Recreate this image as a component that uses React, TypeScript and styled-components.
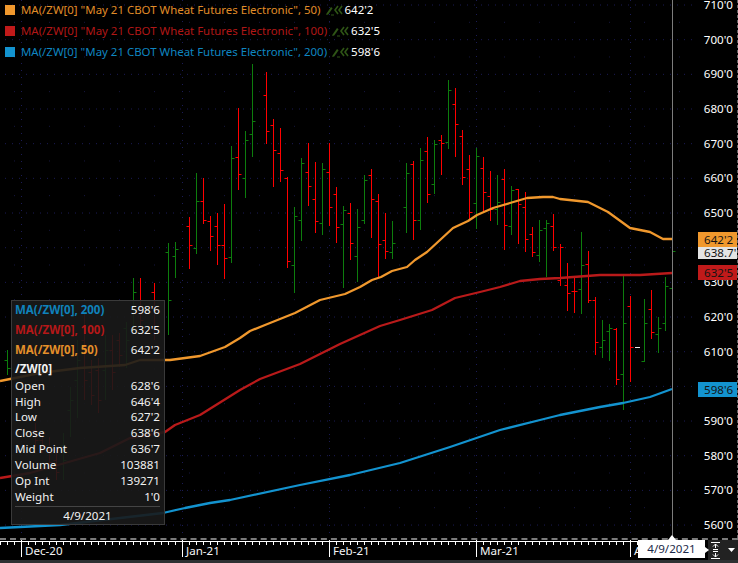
import React from 'react';
import styled, { createGlobalStyle } from 'styled-components';

const UI_FONT = `"Noto Sans", "Liberation Sans", sans-serif`;

const GlobalStyle = createGlobalStyle`
  html, body {
    margin: 0;
    padding: 0;
    background: #000;
  }
`;

// x, high, low, open tick, close tick (all in chart pixels)
type Bar = [number, number, number, number, number];

const RED_BARS: Bar[] = [
  [140, 278, 330, 300, 320], [154, 283, 340, 292, 310],
  [189, 217, 269, 226, 245], [203, 178, 224, 201, 220], [210, 216, 251, 221, 236],
  [217, 213, 265, 226, 245], [224, 204, 279, 245, 258], [238, 108, 190, 157, 174],
  [266, 72, 144, 95, 131], [273, 119, 187, 125, 150], [280, 128, 182, 153, 170],
  [287, 177, 268, 178, 261], [308, 143, 206, 172, 186], [315, 162, 233, 199, 221],
  [329, 143, 226, 172, 207], [336, 187, 243, 194, 227], [350, 203, 260, 213, 243],
  [371, 169, 238, 175, 199], [378, 194, 278, 201, 244], [385, 213, 259, 240, 251],
  [413, 161, 240, 164, 220], [427, 137, 203, 151, 194], [441, 135, 175, 140, 143],
  [455, 88, 157, 104, 124], [462, 130, 185, 136, 177], [469, 155, 220, 169, 212],
  [483, 157, 212, 168, 192], [490, 171, 221, 196, 209], [504, 169, 250, 179, 225],
  [518, 189, 244, 189, 204], [525, 192, 252, 207, 239], [532, 227, 257, 234, 252],
  [553, 214, 251, 226, 247], [560, 244, 286, 280, 247], [567, 263, 311, 285, 293],
  [574, 278, 313, 291, 291], [588, 251, 303, 264, 300], [595, 297, 355, 300, 342],
  [616, 328, 385, 329, 379], [630, 296, 382, 306, 347], [651, 290, 339, 309, 332],
  // behind the data box
  [35, 423, 447, 430, 440], [42, 433, 453, 440, 446], [49, 437, 470, 450, 462],
  [56, 453, 480, 460, 472], [84, 313, 400, 340, 380], [91, 360, 405, 372, 395],
  [98, 358, 413, 370, 400], [112, 335, 390, 350, 372], [119, 333, 367, 340, 355],
];

const GREEN_BARS: Bar[] = [
  [7, 350, 375, 360, 368], [133, 278, 332, 300, 292], [168, 243, 335, 252, 300],
  [175, 242, 278, 256, 249], [196, 173, 254, 248, 201], [231, 146, 263, 257, 158],
  [245, 131, 198, 178, 140], [252, 64, 157, 134, 121], [294, 207, 293, 265, 216],
  [301, 158, 241, 220, 163], [322, 163, 235, 223, 169], [343, 206, 288, 224, 210],
  [357, 209, 282, 256, 227], [364, 175, 224, 220, 180], [392, 221, 259, 252, 243],
  [406, 163, 233, 207, 173], [420, 148, 230, 220, 160], [434, 140, 194, 184, 144],
  [448, 80, 149, 142, 90], [476, 148, 229, 203, 156], [497, 175, 225, 209, 202],
  [511, 186, 235, 226, 190], [539, 220, 262, 255, 230], [546, 220, 277, 228, 223],
  [581, 232, 314, 289, 265], [602, 320, 358, 347, 340], [609, 324, 361, 331, 328],
  [623, 276, 410, 374, 323], [644, 299, 362, 361, 323], [658, 317, 353, 334, 328],
  [665, 277, 331, 323, 286], [672, 225, 291, 288, 251],
  // behind the data box
  [63, 433, 480, 445, 460], [70, 387, 437, 410, 400], [77, 340, 418, 380, 360],
  [105, 335, 400, 370, 350], [126, 322, 368, 328, 340],
];

const MA_50 =
  '0,381 40,373 80,368 125,365 140,360 170,360 200,356 225,347 240,338 250,331 265,325 295,313 320,300 345,294 360,287 372,280 381,277 392,271 407,267 415,260 427,252 440,240 453,228 468,221 477,215 493,208 510,203 527,198 543,197 553,197 560,199 588,202 608,212 630,228 650,232 663,239 672,239';
const MA_100 =
  '0,478 30,473 100,453 130,438 165,432 175,425 200,415 240,390 260,379 300,364 340,344 380,326 400,320 432,310 455,298 480,292 500,287 520,281 540,279 560,278 600,275 640,275 672,273';
const MA_200 =
  '0,528 60,525 163,513 185,508 210,503 230,500 300,485 350,475 400,463 450,447 500,430 540,420 560,415 600,407 623,403 650,397 672,389';

const PRICES = [710, 700, 690, 680, 670, 660, 650, 640, 630, 620, 610, 600, 590, 580, 570, 560];
const MONTHS = [
  { label: 'Dec-20', span: 161 },
  { label: 'Jan-21', span: 147 },
  { label: 'Feb-21', span: 147 },
  { label: 'Mar-21', span: 154 },
  { label: 'Apr-21', span: 60 },
];

const LEGEND = [
  { swatch: '#f0982d', text: '#e08d28', name: 'MA(/ZW[0] "May 21 CBOT Wheat Futures Electronic", 50)', value: "642'2" },
  { swatch: '#c01a1a', text: '#b01717', name: 'MA(/ZW[0] "May 21 CBOT Wheat Futures Electronic", 100)', value: "632'5" },
  { swatch: '#1393cf', text: '#0f86c0', name: 'MA(/ZW[0] "May 21 CBOT Wheat Futures Electronic", 200)', value: "598'6" },
];

const STUDIES = [
  { color: '#0f82bb', name: 'MA(/ZW[0], 200)', value: "598'6" },
  { color: '#b51818', name: 'MA(/ZW[0], 100)', value: "632'5" },
  { color: '#e58f2a', name: 'MA(/ZW[0], 50)', value: "642'2" },
];

const QUOTE = [
  ['Open', "628'6"],
  ['High', "646'4"],
  ['Low', "627'2"],
  ['Close', "638'6"],
  ['Mid Point', "636'7"],
  ['Volume', '103881'],
  ['Op Int', '139271'],
  ['Weight', "1'0"],
];

const BADGES = [
  { top: 232, height: 15, bg: '#f0982d', label: "642'2" },
  { top: 247, height: 12, bg: '#e4e4e4', label: "638.7'" },
  { top: 265, height: 15, bg: '#c01a1a', label: "632'5" },
  { top: 382, height: 15, bg: '#1393cf', label: "598'6" },
];

const barPath = (bars: Bar[]) =>
  bars
    .map(([x, hi, lo, open, close]) => {
      const c = x + 0.5;
      return `M${c} ${hi}V${lo}M${c - 3} ${open + 0.5}H${c}M${c} ${close + 0.5}H${c + 3}`;
    })
    .join('');

const levelRows = PRICES.map((_, i) => 5 + i * 34.67);

const ChartDrawing = () => (
  <ChartSvg viewBox="0 0 698 540">
    {levelRows.map((y) => (
      <g key={y}>
        <line x1="5" x2="695" y1={y} y2={y} stroke="#1b1b55" strokeDasharray="1 6" />
        <line x1="14" x2="695" y1={y + 17.3} y2={y + 17.3} stroke="#17173f" strokeDasharray="1 34" />
      </g>
    ))}
    {[21.5, 182.5, 329.5, 476.5, 630.5].map((x) => (
      <line key={x} x1={x} x2={x} y1="0" y2="538" stroke="#1b1b55" strokeDasharray="1 6" />
    ))}
    <path d={barPath(RED_BARS)} stroke="#f00" fill="none" />
    <path d={barPath(GREEN_BARS)} stroke="#0d7d0d" fill="none" />
    <path d="M635 347.5H640" stroke="#eee" />
    <polyline points={MA_50} stroke="#f0982d" strokeWidth="2.3" fill="none" strokeLinejoin="round" />
    <polyline points={MA_100} stroke="#b91a1a" strokeWidth="2.3" fill="none" strokeLinejoin="round" />
    <polyline points={MA_200} stroke="#1393cf" strokeWidth="2.3" fill="none" strokeLinejoin="round" />
    <line x1="672.5" x2="672.5" y1="0" y2="538" stroke="#7c7c7c" />
  </ChartSvg>
);

const TrendIcon = () => (
  <TrendSvg viewBox="0 0 18 12">
    <path d="M1.5 9.5 6 3l1.600 1.200-4.400 6.300-2 .6z" fill="#2f5516" />
    <path d="M6 11h3" stroke="#2f5516" />
    <path d="M13 2 10 6l3 4M17 2l-3 4 3 4" stroke="#2f5516" strokeWidth="1.600" fill="none" />
  </TrendSvg>
);

const RulerTicks = () => (
  <RulerSvg viewBox="0 0 698 17">
    <path d="M0 1.500H698" stroke="#fff" />
    <path
      d={Array.from({ length: 100 }, (_, i) => `M${0.5 + i * 7} 1V5`).join('')}
      stroke="#fff"
    />
  </RulerSvg>
);

export default function App() {
  return (
    <Screen>
      <GlobalStyle />
      <UpperArea>
        <ChartPane>
          <ChartDrawing />
          <Legend>
            {LEGEND.map((row) => (
              <LegendRow key={row.name}>
                <Swatch $color={row.swatch} />
                <LegendName $color={row.text}>{row.name}</LegendName>
                <TrendIcon />
                <LegendValue>{row.value}</LegendValue>
              </LegendRow>
            ))}
          </Legend>
          <DataBox>
            {STUDIES.map((row) => (
              <StudyRow key={row.name}>
                <StudyName $color={row.color}>{row.name}</StudyName>
                <span>{row.value}</span>
              </StudyRow>
            ))}
            <SymbolRow>/ZW[0]</SymbolRow>
            {QUOTE.map(([name, value]) => (
              <QuoteRow key={name}>
                <span>{name}</span>
                <span>{value}</span>
              </QuoteRow>
            ))}
            <DataBoxDate>4/9/2021</DataBoxDate>
          </DataBox>
        </ChartPane>
        <PriceAxis>
          {PRICES.map((p) => (
            <PriceLabel key={p}>{p}'0</PriceLabel>
          ))}
          {BADGES.map((b) => (
            <PriceBadge key={b.label} $top={b.top} $height={b.height} $bg={b.bg}>
              {b.label}
            </PriceBadge>
          ))}
        </PriceAxis>
      </UpperArea>
      <LowerArea>
        <TimeAxis>
          <RulerTicks />
          {MONTHS.map((m) => (
            <MonthCell key={m.label} $span={m.span}>
              {m.label}
            </MonthCell>
          ))}
          <CursorDate>4/9/2021</CursorDate>
        </TimeAxis>
        <AxisCorner>
          <svg width="9" height="17" viewBox="0 0 9 17">
            <path
              d="M0 .5H9M0 16.500H9M4.500 2v4M4.500 11v4M2 4.500 4.500 2 7 4.500M2 12.500 4.500 15 7 12.500M2 7.500H7M2 9.500H7"
              stroke="#fff"
              fill="none"
            />
          </svg>
          <svg width="7" height="4" viewBox="0 0 7 4">
            <path d="M0 0H7L3.500 4z" fill="#fff" />
          </svg>
        </AxisCorner>
      </LowerArea>
      <BottomBand />
    </Screen>
  );
}

const Screen = styled.div`
  width: 738px;
  height: 563px;
  display: flex;
  flex-direction: column;
  overflow: hidden;
  background: #000;
  font-family: ${UI_FONT};
  font-size: 12px;
  color: #f2f2f2;
`;

const UpperArea = styled.div`
  display: flex;
  height: 540px;
  box-sizing: border-box;
  border-bottom: 2px dashed #7a7a7a;
  position: relative;
`;

const ChartPane = styled.div`
  width: 698px;
  position: relative;
  overflow: hidden;
`;

const ChartSvg = styled.svg`
  display: block;
  width: 698px;
  height: 540px;
`;

const Legend = styled.div`
  position: absolute;
  top: 0;
  left: 5px;
  display: flex;
  flex-direction: column;
  margin-top: -1px;
`;

const LegendRow = styled.div`
  display: flex;
  align-items: center;
  height: 21px;
  white-space: nowrap;
`;

const Swatch = styled.span<{ $color: string }>`
  width: 10px;
  height: 10px;
  margin-right: 6px;
  background: ${(p) => p.$color};
`;

const LegendName = styled.span<{ $color: string }>`
  color: ${(p) => p.$color};
  font-size: 11.45px;
`;

const TrendSvg = styled.svg`
  width: 18px;
  height: 12px;
  margin: 0 2px 0 4px;
`;

const LegendValue = styled.span`
  color: #fff;
  font-size: 11.5px;
`;

const DataBox = styled.div`
  position: absolute;
  top: 300px;
  left: 11px;
  width: 154px;
  height: 225px;
  box-sizing: border-box;
  padding: 0 4px 0 3px;
  display: flex;
  flex-direction: column;
  background: rgba(26, 26, 26, 0.9);
  border: 1px solid #3a3a3a;
  font-size: 11.6px;
`;

const StudyRow = styled.div`
  display: flex;
  justify-content: space-between;
  align-items: center;
  height: 20px;
  &:first-child {
    margin-top: -1px;
  }
`;

const StudyName = styled.span<{ $color: string }>`
  color: ${(p) => p.$color};
  font-weight: 700;
  font-size: 11.5px;
`;

const SymbolRow = styled.div`
  display: flex;
  align-items: center;
  height: 18px;
  font-weight: 700;
`;

const QuoteRow = styled.div`
  display: flex;
  justify-content: space-between;
  align-items: center;
  height: 16px;
`;

const DataBoxDate = styled.div`
  margin-top: 2px;
  padding-top: 1px;
  border-top: 1px solid #444;
  text-align: center;
  line-height: 16px;
`;

const PriceAxis = styled.div`
  width: 40px;
  box-sizing: border-box;
  position: relative;
  overflow: hidden;
  border-right: 1px dashed #666;
  display: flex;
  flex-direction: column;
`;

const PriceLabel = styled.div`
  flex: none;
  height: 34.67px;
  line-height: 10px;
  text-align: right;
  padding-right: 4px;
  font-size: 11.6px;
  color: #fff;
`;

const PriceBadge = styled.div<{ $top: number; $height: number; $bg: string }>`
  position: absolute;
  left: 0;
  right: 0;
  top: ${(p) => p.$top}px;
  height: ${(p) => p.$height}px;
  line-height: ${(p) => p.$height}px;
  background: ${(p) => p.$bg};
  color: #141414;
  font-size: 11.6px;
  padding-left: 6px;
  white-space: nowrap;
`;

const LowerArea = styled.div`
  display: flex;
  height: 20px;
  background: #000;
`;

const TimeAxis = styled.div`
  width: 708px;
  box-sizing: border-box;
  padding-left: 21px;
  position: relative;
  display: flex;
`;

const RulerSvg = styled.svg`
  position: absolute;
  left: 0;
  top: 0;
  width: 698px;
  height: 17px;
`;

const MonthCell = styled.div<{ $span: number }>`
  flex: none;
  width: ${(p) => p.$span}px;
  box-sizing: border-box;
  height: 17px;
  border-left: 1px solid #fff;
  padding: 4px 0 0 3px;
  font-size: 11.6px;
  line-height: 13px;
  color: #f4f4f4;
  overflow: hidden;
  white-space: nowrap;
`;

const CursorDate = styled.div`
  position: absolute;
  left: 638px;
  top: 0;
  width: 67px;
  height: 18px;
  background: #fff;
  color: #1c2a4a;
  font-size: 11.6px;
  line-height: 18px;
  text-align: center;
  &::before {
    content: '';
    position: absolute;
    left: 30px;
    top: -5px;
    border-left: 4px solid transparent;
    border-right: 4px solid transparent;
    border-bottom: 5px solid #fff;
  }
  &::after {
    content: '';
    position: absolute;
    right: -4px;
    top: 7px;
    border-top: 3px solid transparent;
    border-bottom: 3px solid transparent;
    border-left: 4px solid #fff;
  }
`;

const AxisCorner = styled.div`
  flex: 1;
  display: flex;
  align-items: center;
  justify-content: space-between;
  padding: 0 3px;
  background: #222;
`;

const BottomBand = styled.div`
  height: 3px;
  background: #2e3032;
`;
